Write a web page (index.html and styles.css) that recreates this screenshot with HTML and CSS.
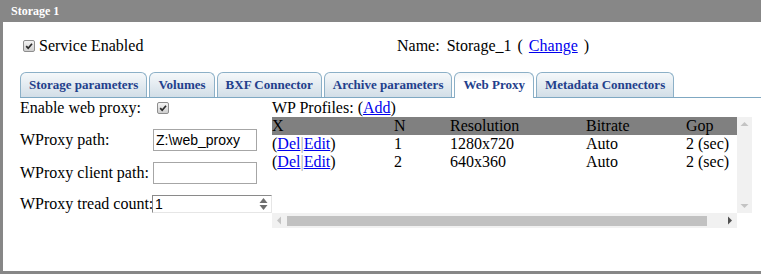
FILE: index.html
```html
<!DOCTYPE html>
<html>
<head>
<meta charset="utf-8">
<title>Storage 1</title>
<link rel="stylesheet" href="styles.css">
</head>
<body>
<div class="panel">
  <div class="title">Storage 1</div>
  <div class="content">
    <div class="top-row">
      <label class="svc">
        <span class="cb"><svg viewBox="0 0 12 12" width="12" height="12"><path d="M2.6 6.2 L5 8.6 L9.6 3.2" fill="none" stroke="#2b2b2b" stroke-width="2"/></svg></span>Service Enabled
      </label>
      <div class="name">
        <span>Name:</span><span class="name-val">Storage_1</span><span class="paren">(</span><a href="#" class="change">Change</a><span class="paren-close">)</span>
      </div>
    </div>
    <ul class="tabs">
      <li class="tab">Storage parameters</li>
      <li class="tab">Volumes</li>
      <li class="tab">BXF Connector</li>
      <li class="tab">Archive parameters</li>
      <li class="tab active">Web Proxy</li>
      <li class="tab">Metadata Connectors</li>
    </ul>
    <div class="tab-body">
      <div class="form">
        <div class="lbl">Enable web proxy:</div>
        <div class="fld"><span class="cb cb-field"><svg viewBox="0 0 12 12" width="12" height="12"><path d="M2.6 6.2 L5 8.6 L9.6 3.2" fill="none" stroke="#2b2b2b" stroke-width="2"/></svg></span></div>
        <div class="lbl">WProxy path:</div>
        <div class="fld"><input class="txt" type="text" value="Z:\web_proxy"></div>
        <div class="lbl">WProxy client path:</div>
        <div class="fld"><input class="txt" type="text" value=""></div>
        <div class="lbl">WProxy tread count:</div>
        <div class="fld">
          <div class="num">
            <input class="num-input" type="text" value="1">
            <svg class="spin" viewBox="0 0 9 14" width="9" height="14"><polygon points="0.5,6 4.5,1 8.5,6" fill="#6e6e6e"/><polygon points="0.5,8 4.5,13 8.5,8" fill="#6e6e6e"/></svg>
          </div>
        </div>
      </div>
      <div class="profiles">
        <div class="prof-title">WP Profiles: (<a href="#">Add</a>)</div>
        <div class="scroll">
          <div class="viewport">
            <table class="grid">
              <colgroup>
                <col style="width:122px"><col style="width:56px"><col style="width:136px"><col style="width:100px"><col style="width:66px">
              </colgroup>
              <thead>
                <tr><th>X</th><th>N</th><th>Resolution</th><th>Bitrate</th><th>Gop</th></tr>
              </thead>
              <tbody>
                <tr><td>(<a href="#">Del</a><span class="sep">|</span><a href="#">Edit</a>)</td><td>1</td><td>1280x720</td><td>Auto</td><td>2 (sec)</td></tr>
                <tr><td>(<a href="#">Del</a><span class="sep">|</span><a href="#">Edit</a>)</td><td>2</td><td>640x360</td><td>Auto</td><td>2 (sec)</td></tr>
              </tbody>
            </table>
          </div>
          <div class="vbar">
            <svg class="sb-btn" viewBox="0 0 15 15" width="15" height="15"><polygon points="3.5,9 7.5,5 11.5,9" fill="#c3c3c3"/></svg>
            <div class="sb-fill"></div>
            <svg class="sb-btn" viewBox="0 0 15 15" width="15" height="15"><polygon points="3.5,6 7.5,10 11.5,6" fill="#c3c3c3"/></svg>
          </div>
          <div class="hbar">
            <svg class="sb-btn" viewBox="0 0 15 15" width="15" height="15"><polygon points="9,3.5 5,7.5 9,11.5" fill="#c3c3c3"/></svg>
            <div class="sb-track"><div class="sb-thumb"></div></div>
            <svg class="sb-btn" viewBox="0 0 15 15" width="15" height="15"><polygon points="6,3.5 10,7.5 6,11.5" fill="#505050"/></svg>
          </div>
          <div class="corner"></div>
        </div>
      </div>
    </div>
  </div>
</div>
</body>
</html>
```

FILE: styles.css
```css
html, body {
  margin: 0;
  padding: 0;
  overflow: hidden;
  background: #fff;
}

body {
  font-family: "Liberation Serif", "Times New Roman", serif;
  font-size: 16px;
  color: #000;
}

a {
  color: #0000ee;
  text-decoration: underline;
}

.panel {
  width: 790px;
  height: 274px;
  box-sizing: border-box;
  border-left: 3px solid #878787;
  border-bottom: 3px solid #878787;
}

.title {
  height: 22px;
  line-height: 23px;
  background: #878787;
  color: #fff;
  font-weight: bold;
  font-size: 12px;
  padding-left: 8px;
}

.content {
  padding-left: 17px;
}

.top-row {
  display: grid;
  grid-template-columns: 377px auto;
  padding-top: 14px;
  height: 20px;
  line-height: 20px;
}

.svc {
  display: flex;
  align-items: center;
}

.cb {
  box-sizing: border-box;
  width: 12px;
  height: 12px;
  border: 1px solid #8e8e8e;
  border-radius: 2px;
  background: linear-gradient(#f4f4f4, #cfcfcf);
  display: inline-flex;
  align-items: center;
  justify-content: center;
  margin: 0 4px 0 3px;
}

.cb svg {
  width: 10px;
  height: 10px;
}

.name-val {
  margin-left: 7px;
}

.paren {
  margin-left: 6px;
}

.change {
  margin-left: 6px;
}

.paren-close {
  margin-left: 6px;
}

.tabs {
  display: flex;
  margin: 16px 0 0;
  padding: 0;
  list-style: none;
  height: 25px;
  border-bottom: 1px solid #7fa8c2;
}

.tab {
  box-sizing: border-box;
  height: 25px;
  margin-right: 2px;
  padding: 0 8px;
  border: 1px solid #8cb0c7;
  border-bottom: none;
  border-radius: 6px 6px 0 0;
  background: linear-gradient(#f5f8fa, #d2dee7);
  font-weight: bold;
  font-size: 13px;
  line-height: 24px;
  color: #23408c;
  white-space: nowrap;
}

.tab.active {
  height: 26px;
  margin-bottom: -1px;
  background: linear-gradient(#f3f6f8, #ffffff 40%);
}

.tab-body {
  display: flex;
}

.form {
  width: 252px;
  display: grid;
  grid-template-columns: 133px 119px;
  grid-template-rows: 20px 22px 22px 18px;
  row-gap: 11px;
  align-items: center;
}

.lbl {
  white-space: nowrap;
}

.fld {
  display: flex;
  align-items: center;
}

.cb-field {
  margin: 0 0 0 4px;
}

.txt {
  box-sizing: border-box;
  width: 104px;
  height: 22px;
  margin: 0;
  padding: 0 2px;
  border: 1px solid #a6a6a6;
  font-family: "Liberation Sans", Arial, sans-serif;
  font-size: 14px;
  color: #000;
  background: #fff;
}

.num {
  box-sizing: border-box;
  width: 120px;
  height: 18px;
  margin-left: -1px;
  display: flex;
  align-items: center;
  border-top: 1px solid #8a8a8a;
  border-left: 1px solid #8a8a8a;
  border-right: 1px solid #e6e6e6;
  border-bottom: 1px solid #e6e6e6;
}

.num-input {
  flex: 1;
  min-width: 0;
  border: none;
  padding: 0 0 0 2px;
  margin: 0;
  height: 16px;
  font-family: "Liberation Sans", Arial, sans-serif;
  font-size: 14px;
  color: #000;
  background: transparent;
}

.spin {
  margin-right: 3px;
}

.profiles {
  width: 480px;
}

.prof-title {
  height: 19px;
  line-height: 19px;
}

.scroll {
  display: grid;
  grid-template-columns: 465px 15px;
  grid-template-rows: 96px 15px;
}

.viewport {
  overflow: hidden;
}

.grid {
  width: 480px;
  border-collapse: collapse;
  table-layout: fixed;
  line-height: 18px;
}

.grid th,
.grid td {
  padding: 0;
  height: 18px;
  text-align: left;
  font-weight: normal;
  white-space: nowrap;
}

.grid thead tr {
  background: #808080;
}

.sep {
  color: #a0a0a0;
}

.vbar {
  display: flex;
  flex-direction: column;
  background: #f1f1f1;
}

.sb-btn {
  display: block;
  flex: none;
}

.sb-fill {
  flex: 1;
}

.hbar {
  display: flex;
  background: #f1f1f1;
}

.sb-track {
  flex: 1;
  display: flex;
  align-items: center;
}

.sb-thumb {
  width: 420px;
  height: 10px;
  background: #c1c1c1;
}

.corner {
  background: #fff;
}
```
